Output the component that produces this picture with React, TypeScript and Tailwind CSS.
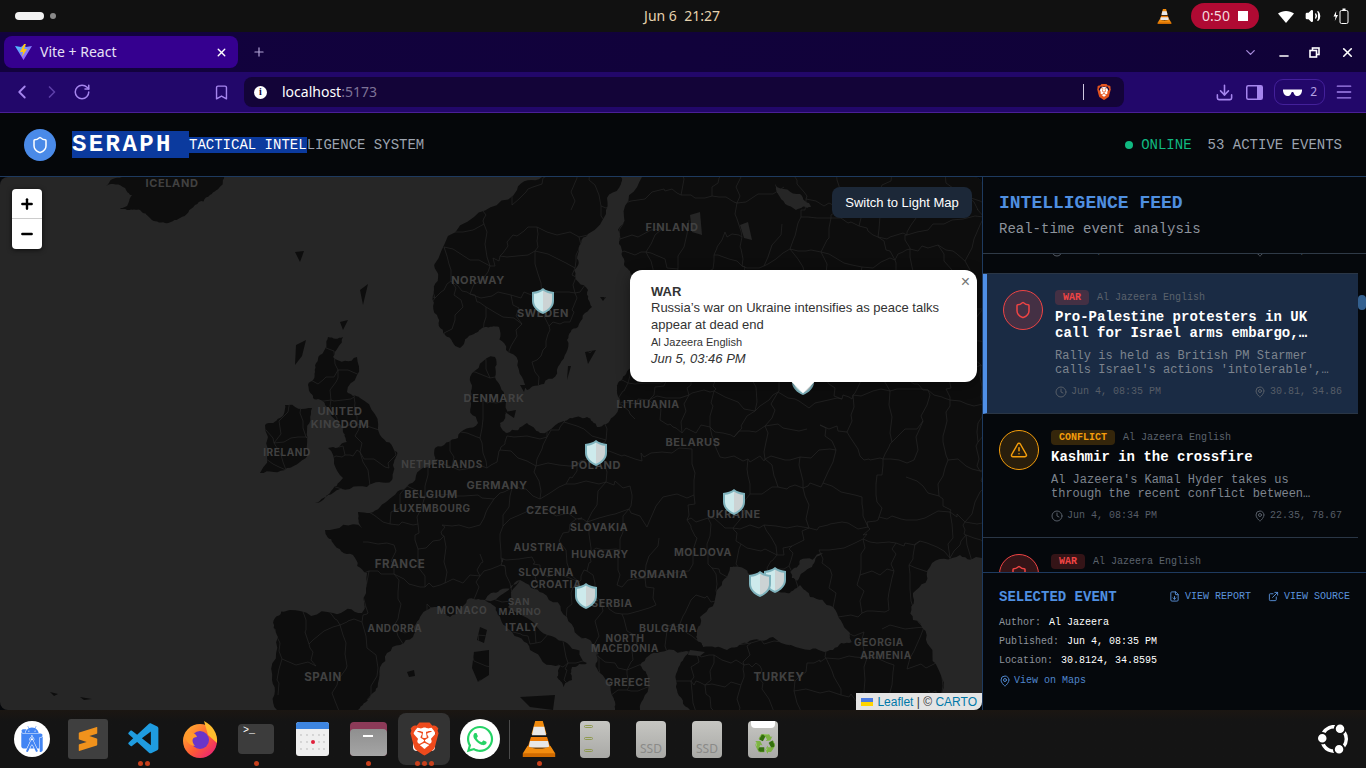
import {
  AlertTriangle,
  Bookmark,
  ChevronDown,
  ChevronLeft,
  ChevronRight,
  Clock,
  Download,
  ExternalLink,
  FileDown,
  MapPin,
  Menu,
  Minus,
  Plus,
  RotateCw,
  Shield,
  Volume2,
  X,
} from "lucide-react";
import { FaWhatsapp } from "react-icons/fa";
import { SiAndroidstudio, SiBrave, SiSublimetext, SiUbuntu } from "react-icons/si";
import { VscVscode } from "react-icons/vsc";

const mono = "font-['Liberation_Mono',monospace]";

type Pt = number[];

const rnd = (a: number, b: number) => {
  const v = Math.sin(a * 12.9898 + b * 78.233) * 43758.5453;
  return v - Math.floor(v);
};

const onFrame = (a: Pt, b: Pt) =>
  (a[1] <= 177 && b[1] <= 177) || (a[1] >= 710 && b[1] >= 710) || (a[0] >= 982 && b[0] >= 982);

// break the straight coast edges up a bit so they read as coastline
const roughen = (pts: Pt[], seed: number) => {
  if (pts.length < 6) return pts;
  let out = pts;
  for (let round = 0; round < 3; round++) {
    const next: Pt[] = [];
    out.forEach((a, i) => {
      const b = out[(i + 1) % out.length];
      next.push(a);
      if (onFrame(a, b)) return;
      const dx = b[0] - a[0];
      const dy = b[1] - a[1];
      const k = (rnd(a[0] + seed, b[1] + round) - 0.5) * 0.34;
      next.push([
        Math.round((a[0] + dx / 2 - dy * k) * 10) / 10,
        Math.round((a[1] + dy / 2 + dx * k) * 10) / 10,
      ]);
    });
    out = next;
  }
  return out;
};

const toPath = (pts: Pt[]) => "M" + pts.map((p) => p.join(" ")).join("L") + "Z";

const LAND: Pt[][] = [
  // mainland
  [
    [642, 177], [624, 217], [619, 244], [624, 264], [631, 274], [660, 300], [650, 340], [628, 370],
    [618, 383], [617, 393], [613, 417], [597, 427], [587, 417], [570, 418], [540, 433], [527, 423],
    [507, 433], [500, 423], [506, 397], [495, 377], [495, 357], [470, 377], [470, 400], [478, 423],
    [458, 438], [435, 448], [437, 463], [420, 470], [400, 490], [380, 507], [358, 512], [362, 528],
    [325, 530], [333, 543], [353, 555], [367, 573], [362, 613], [333, 613], [290, 610], [275, 618],
    [278, 637], [272, 680], [277, 710], [358, 710], [370, 697], [378, 683], [387, 653], [413, 637],
    [420, 617], [440, 607], [450, 617], [467, 600], [485, 600], [500, 590], [520, 580], [543, 593],
    [567, 617], [590, 640], [597, 653], [600, 673], [613, 697], [615, 710], [640, 710], [648, 680],
    [640, 665], [660, 652], [695, 650], [680, 665], [677, 690], [690, 710], [982, 710], [982, 177],
  ],
  // scandinavia
  [
    [434, 265], [474, 217], [517, 190], [542, 177], [621, 177], [621, 184], [606, 210], [588, 234],
    [578, 254], [574, 270], [588, 290], [592, 307], [578, 327], [567, 340], [560, 364], [544, 384],
    [527, 390], [522, 377], [506, 350], [499, 327], [485, 327], [474, 334], [460, 348], [445, 335],
    [437, 315], [434, 290],
  ],
  // iceland
  [
    [122, 177], [224, 177], [222, 185], [210, 195], [195, 205], [180, 218], [165, 223], [150, 218],
    [140, 210], [128, 210], [120, 208], [132, 195], [125, 188], [106, 186],
  ],
  // great britain
  [
    [328, 337], [343, 337], [333, 357], [357, 357], [347, 392], [360, 398], [380, 435], [397, 452],
    [393, 465], [392, 480], [367, 487], [333, 493], [315, 503], [330, 493], [343, 478], [328, 448],
    [347, 442], [343, 432], [325, 405], [313, 398], [308, 385], [315, 372], [320, 355],
  ],
  // ireland
  [[285, 405], [312, 408], [307, 432], [308, 452], [287, 468], [260, 473], [265, 425], [280, 418]],
  // italy
  [
    [485, 600], [520, 580], [508, 607], [537, 627], [567, 643], [587, 663], [572, 667], [572, 680],
    [563, 687], [557, 677], [560, 665], [530, 650], [510, 630], [497, 612],
  ],
  // sicily, corsica, sardinia
  [[520, 697], [555, 695], [553, 710], [530, 707]],
  [[480, 627], [487, 630], [484, 643], [477, 640]],
  [[474, 652], [489, 650], [489, 675], [478, 682], [472, 668]],
  // small islands
  [[585, 352], [596, 350], [588, 364]],
  [[568, 366], [571, 366], [567, 380]],
  [[600, 297], [606, 297], [603, 301]],
  [[407, 672], [414, 670], [415, 676], [409, 677]],
  [[295, 252], [304, 251], [300, 262]],
  [[360, 290], [368, 284], [363, 305]],
  [[296, 345], [306, 340], [302, 356], [295, 365]],
  [[340, 322], [348, 320], [343, 330]],
  [[520, 385], [526, 385], [524, 392]],
  [[505, 412], [516, 410], [514, 418]],
  [[50, 692], [58, 694], [54, 696]],
  [[80, 697], [92, 699], [84, 700]],
];

const SEAS: Pt[][] = [
  // black sea
  [
    [697, 633], [700, 617], [717, 590], [730, 567], [740, 567], [753, 577], [777, 590], [790, 593],
    [800, 585], [810, 597], [833, 607], [850, 633], [852, 642], [833, 650], [810, 650], [773, 637],
    [747, 643], [727, 650], [703, 647], [697, 640],
  ],
  // azov
  [[790, 572], [800, 560], [823, 553], [812, 567], [797, 581], [792, 578]],
  // caspian
  [
    [913, 593], [930, 567], [960, 555], [982, 558], [982, 710], [933, 710], [940, 673], [930, 647],
    [913, 620],
  ],
  // white sea
  [[775, 184], [800, 194], [811, 207], [796, 210], [778, 194], [776, 188]],
  // marmara and lakes
  [[690, 650], [705, 652], [700, 656], [688, 655]],
  [[690, 215], [700, 212], [702, 235], [692, 232]],
  [[740, 225], [748, 222], [752, 240], [744, 238]],
];

const LAND_PATH = LAND.map((p, i) => toPath(roughen(p, i * 7 + 1))).join("");
const SEA_PATHS = SEAS.map((p, i) => toPath(roughen(p, i * 5 + 2)));

// thin regional borders, jittered mesh clipped to the land
const buildBorders = () => {
  const cell = 29;
  const pt = (i: number, j: number) => [
    Math.round(250 + i * cell + (rnd(i, j) - 0.5) * 24),
    Math.round(170 + j * cell + (rnd(j + 40, i) - 0.5) * 24),
  ];
  let d = "";
  const edge = (a: number[], b: number[], s: number) => {
    d += `M${a[0]} ${a[1]}`;
    for (let t = 1; t < 4; t++) {
      const x = a[0] + ((b[0] - a[0]) * t) / 4 + (rnd(s + t, a[0]) - 0.5) * 7;
      const y = a[1] + ((b[1] - a[1]) * t) / 4 + (rnd(a[1], s + t) - 0.5) * 7;
      d += `L${Math.round(x)} ${Math.round(y)}`;
    }
    d += `L${b[0]} ${b[1]}`;
  };
  for (let i = 0; i < 27; i++) {
    for (let j = 0; j < 20; j++) {
      if (rnd(i + 3, j + 7) > 0.3) edge(pt(i, j), pt(i + 1, j), i + j);
      if (rnd(i + 9, j + 2) > 0.3) edge(pt(i, j), pt(i, j + 1), i * j + 1);
    }
  }
  return d;
};

const BORDERS = buildBorders();

const LABELS: [string, number, number, number][] = [
  ["ICELAND", 172, 187, 11],
  ["NORWAY", 478, 284, 11],
  ["SWEDEN", 543, 317, 11],
  ["FINLAND", 672, 231, 11],
  ["DENMARK", 494, 402, 11],
  ["LITHUANIA", 648, 408, 10.5],
  ["UNITED", 340, 415, 11],
  ["KINGDOM", 340, 428, 11],
  ["IRELAND", 287, 456, 10],
  ["NETHERLANDS", 442, 468, 10],
  ["BELARUS", 693, 446, 11],
  ["POLAND", 596, 469, 11],
  ["BELGIUM", 431, 498, 11],
  ["GERMANY", 497, 489, 11],
  ["LUXEMBOURG", 432, 512, 10],
  ["CZECHIA", 552, 514, 10.5],
  ["UKRAINE", 734, 518, 11],
  ["SLOVAKIA", 599, 531, 10.5],
  ["AUSTRIA", 539, 551, 10.5],
  ["HUNGARY", 600, 558, 10.5],
  ["MOLDOVA", 703, 556, 10.5],
  ["FRANCE", 400, 568, 11.5],
  ["ROMANIA", 659, 578, 11],
  ["SLOVENIA", 546, 576, 10],
  ["CROATIA", 556, 588, 10.5],
  ["SERBIA", 612, 607, 10.5],
  ["MONACO", 462, 614, 10],
  ["SAN", 519, 605, 9.5],
  ["MARINO", 520, 615, 9.5],
  ["ANDORRA", 395, 632, 10],
  ["ITALY", 522, 631, 11],
  ["BULGARIA", 668, 632, 10.5],
  ["NORTH", 625, 642, 10],
  ["MACEDONIA", 625, 652, 10],
  ["GEORGIA", 879, 646, 10],
  ["ARMENIA", 886, 659, 10],
  ["SPAIN", 323, 681, 11.5],
  ["TURKEY", 779, 681, 11.5],
  ["GREECE", 628, 686, 10.5],
];

const MARKERS: [number, number][] = [
  [543, 301],
  [596, 453],
  [734, 502],
  [586, 596],
  [775, 580],
  [760, 584],
  [803, 382],
];

function MapMarker({ x, y }: { x: number; y: number }) {
  return (
    <g transform={`translate(${x - 11} ${y - 13})`}>
      <path d="M11 0C14 2.6 18 3.6 22 4V13C22 19 17 23.6 11 26C5 23.6 0 19 0 13V4C4 3.6 8 2.6 11 0Z" fill="#7fb3bd" />
      <path d="M11 2.4C8.4 4.4 5.4 5.4 2 5.8V13C2 18 6 21.8 11 23.8Z" fill="#cdeaec" />
      <path d="M11 2.4C13.6 4.4 16.6 5.4 20 5.8V13C20 18 16 21.8 11 23.8Z" fill="#ccd3d4" />
    </g>
  );
}

function WorldMap() {
  return (
    <svg className="absolute inset-0 h-full w-full" viewBox="0 177 982 533">
      <defs>
        <clipPath id="land-clip">
          <path d={LAND_PATH} />
        </clipPath>
      </defs>
      <rect x="0" y="177" width="982" height="533" fill="#262626" />
      <path d={LAND_PATH} fill="#0d0d0d" />
      <path d={BORDERS} clipPath="url(#land-clip)" fill="none" stroke="#262626" strokeWidth="0.7" />
      {SEA_PATHS.map((d, i) => (
        <path key={i} d={d} fill="#262626" />
      ))}
      {LABELS.map(([name, x, y, size]) => (
        <text
          key={name}
          x={x}
          y={y}
          textAnchor="middle"
          fontFamily="Inter, sans-serif"
          fontWeight="700"
          fontSize={size}
          letterSpacing="0.6"
          fill="#414141"
        >
          {name}
        </text>
      ))}
      {MARKERS.map(([x, y]) => (
        <MapMarker key={`${x}-${y}`} x={x} y={y} />
      ))}
    </svg>
  );
}

function EventItem({
  kind,
  title,
  desc,
  date,
  coords,
  active,
}: {
  kind: "WAR" | "CONFLICT";
  title: string;
  desc: string;
  date: string;
  coords: string;
  active?: boolean;
}) {
  const war = kind === "WAR";
  return (
    <div
      className={`flex gap-3 border-b border-[#2a3646] px-4 pb-[15px] pt-4 ${
        active ? "border-l-4 border-l-[#4f8fe6] bg-[#1a2b44]" : ""
      }`}
    >
      <div
        className={`flex h-10 w-10 shrink-0 items-center justify-center rounded-full border ${
          war ? "border-[#ef4444] bg-[#ef4444]/20 text-[#ef4444]" : "border-[#f59e0b] bg-[#f59e0b]/15 text-[#f59e0b]"
        }`}
      >
        {war ? <Shield size={18} /> : <AlertTriangle size={18} />}
      </div>
      <div className="min-w-0 flex-1">
        <div className="flex h-[15px] items-center gap-2 text-[10px]">
          <span
            className={`rounded px-2 font-bold leading-[15px] ${
              war ? "bg-[#ef4444]/20 text-[#ef4444]" : "bg-[#f59e0b]/20 text-[#f59e0b]"
            }`}
          >
            {kind}
          </span>
          <span className="text-[#5b626c]">Al Jazeera English</span>
        </div>
        <div className="mt-[4px] line-clamp-2 text-sm font-bold leading-4 text-white">{title}</div>
        <div className="mt-2 line-clamp-2 text-xs leading-[14px] text-[#7d848e]">{desc}</div>
        <div className="mt-2 flex h-[13px] items-center justify-between text-[10px] text-[#565d67]">
          <span className="flex items-center gap-1">
            <Clock size={12} />
            {date}
          </span>
          <span className="flex items-center gap-1">
            <MapPin size={12} />
            {coords}
          </span>
        </div>
      </div>
    </div>
  );
}

function FeedPanel() {
  return (
    <div className={`flex w-[384px] shrink-0 flex-col border-l border-[#1e3a5f] bg-[#05080c] ${mono}`}>
      <div className="h-[77px] shrink-0 border-b border-[#2f3a47] px-4 pt-4">
        <h2 className="text-lg font-bold leading-[20px] text-[#4f8fe0]">INTELLIGENCE FEED</h2>
        <p className="mt-[6px] text-sm leading-[20px] text-[#8d939c]">Real-time event analysis</p>
      </div>
      <div className="flex min-h-0 flex-1 overflow-hidden">
        <div className="min-w-0 flex-1">
          <div className="flex h-5 flex-col justify-end overflow-hidden border-b border-[#2a3646] pb-[16px] pl-[68px] pr-4">
            <div className="flex h-[13px] shrink-0 items-center justify-between text-[10px] text-[#565d67]">
              <span className="flex items-center gap-1">
                <Clock size={12} />
                Jun 4, 08:36 PM
              </span>
              <span className="flex items-center gap-1">
                <MapPin size={12} />
                33.51, 36.29
              </span>
            </div>
          </div>
          <EventItem
            active
            kind="WAR"
            title="Pro-Palestine protesters in UK call for Israel arms embargo, sanctions"
            desc="Rally is held as British PM Starmer calls Israel's actions 'intolerable', demonstrators demand"
            date="Jun 4, 08:35 PM"
            coords="30.81, 34.86"
          />
          <EventItem
            kind="CONFLICT"
            title="Kashmir in the crossfire"
            desc="Al Jazeera's Kamal Hyder takes us through the recent conflict between Pakistan and India"
            date="Jun 4, 08:34 PM"
            coords="22.35, 78.67"
          />
          <div className="flex gap-3 px-4 pt-4">
            <div className="flex h-10 w-10 shrink-0 items-center justify-center rounded-full border border-[#ef4444] bg-[#ef4444]/20 text-[#ef4444]">
              <Shield size={18} />
            </div>
            <div className="flex h-[15px] items-center gap-2 text-[10px]">
              <span className="rounded bg-[#ef4444]/20 px-2 font-bold leading-[15px] text-[#ef4444]">WAR</span>
              <span className="text-[#5b626c]">Al Jazeera English</span>
            </div>
          </div>
        </div>
        <div className="w-2 shrink-0 pt-[41px]">
          <div className="h-[15px] w-2 rounded-full bg-[#33608f]" />
        </div>
      </div>
      <div className="h-[138px] shrink-0 border-t border-[#1e3a5f] bg-[#05080c] px-4 pt-4 text-[10px]">
        <div className="flex h-[15px] items-center justify-between">
          <h3 className="text-sm font-bold text-[#4f8fe0]">SELECTED EVENT</h3>
          <div className="flex items-center gap-[17px] text-[#5b93dc]">
            <span className="flex items-center gap-[5px]">
              <FileDown size={11} />
              VIEW REPORT
            </span>
            <span className="flex items-center gap-[5px]">
              <ExternalLink size={11} />
              VIEW SOURCE
            </span>
          </div>
        </div>
        <div className="mt-[13px] flex flex-col gap-[7px] leading-3">
          <div>
            <span className="text-[#8d939c]">Author:</span>
            <span className="ml-2 text-white">Al Jazeera</span>
          </div>
          <div>
            <span className="text-[#8d939c]">Published:</span>
            <span className="ml-2 text-white">Jun 4, 08:35 PM</span>
          </div>
          <div>
            <span className="text-[#8d939c]">Location:</span>
            <span className="ml-2 text-white">30.8124, 34.8595</span>
          </div>
          <div className="flex items-center gap-[3px] pt-px text-[#4f86cc]">
            <MapPin size={12} />
            View on Maps
          </div>
        </div>
      </div>
    </div>
  );
}

function MapPanel() {
  return (
    <div className="relative min-w-0 flex-1 overflow-hidden rounded-lg">
      <WorldMap />
      <div className="absolute left-3 top-3 w-[30px] overflow-hidden rounded bg-white text-black shadow-[0_1px_5px_rgba(0,0,0,0.65)]">
        <div className="flex h-[30px] items-center justify-center border-b border-[#ccc]">
          <Plus size={16} strokeWidth={3.6} />
        </div>
        <div className="flex h-[30px] items-center justify-center">
          <Minus size={16} strokeWidth={3.6} />
        </div>
      </div>
      <button className="absolute right-[10px] top-[10px] flex h-[31px] w-[140px] items-center justify-center rounded-lg bg-[#1c2838] font-['Liberation_Sans',sans-serif] text-[13px] text-white">
        Switch to Light Map
      </button>
      <div className="absolute left-[630px] top-[93px] h-[112px] w-[347px] rounded-xl bg-white pl-[21px] pt-[13px] font-['Liberation_Sans',sans-serif] text-[13px] leading-[17px] text-[#333] shadow-[0_3px_14px_rgba(0,0,0,0.4)]">
        <div className="font-bold">WAR</div>
        <div className="-mt-px w-[300px]">Russia’s war on Ukraine intensifies as peace talks appear at dead end</div>
        <div className="mt-[2px] text-[11px] leading-[15px]">Al Jazeera English</div>
        <div className="italic">Jun 5, 03:46 PM</div>
        <span className="absolute right-[7px] top-[4px] text-base leading-4 text-[#757575]">×</span>
        <div className="absolute bottom-[-8px] left-[165px] h-4 w-4 rotate-45 bg-white" />
      </div>
      <div className="absolute bottom-0 right-0 flex h-[17px] items-center gap-1 bg-[#e4e4e4] pl-[5px] pr-[5px] font-['Liberation_Sans',sans-serif] text-xs text-[#333]">
        <svg width="12" height="8" viewBox="0 0 12 8">
          <rect width="12" height="4" fill="#4C7BE1" />
          <rect y="4" width="12" height="4" fill="#FFD500" />
        </svg>
        <span>
          <span className="text-[#0078a8]">Leaflet</span> | © <span className="text-[#0078a8]">CARTO</span>
        </span>
      </div>
    </div>
  );
}

function AppHeader() {
  return (
    <div className={`flex h-[64px] shrink-0 items-center justify-between border-b border-[#1e3a5f] bg-[#05070a] pl-6 pr-6 ${mono}`}>
      <div className="flex items-center">
        <div className="flex h-8 w-8 items-center justify-center rounded-full bg-[#4a8ae8]">
          <Shield size={18} className="text-white" />
        </div>
        <div className="ml-4 flex h-[27px] w-[117px] items-center bg-[#0b3a9e] text-2xl font-bold tracking-[2.4px] text-white">
          SERAPH
        </div>
        <div className="text-sm text-[#9ca3af]">
          <span className="bg-[#0b3a9e] text-white">TACTICAL INTEL</span>LIGENCE SYSTEM
        </div>
      </div>
      <div className="flex items-center text-sm">
        <span className="h-2 w-2 rounded-full bg-[#10b981]" />
        <span className="ml-2 text-[#10b981]">ONLINE</span>
        <span className="ml-4 text-[#9ca3af]">53 ACTIVE EVENTS</span>
      </div>
    </div>
  );
}

function VlcCone({ size }: { size: number }) {
  return (
    <svg width={size} height={size} viewBox="0 0 34 38">
      <path d="M13 0H21L25 14H9Z" fill="#f08a0c" />
      <path d="M11.5 6H22.5L24.5 15H9.5Z" fill="#e8e8e8" />
      <path d="M8.5 17H25.5L29 28H5Z" fill="#ee7d08" />
      <path d="M7.5 21H26.5L28 28H6Z" fill="#e8e8e8" />
      <path d="M5 26C10 30 24 30 29 26L34 34V38H0V34Z" fill="#f28c0f" />
      <path d="M0 34H34V38H0Z" fill="#cf6a00" />
    </svg>
  );
}

function SystemBar() {
  return (
    <div className="flex h-8 shrink-0 items-center bg-[#111111] pl-[15px] pr-[17px] font-['Noto_Sans',sans-serif]">
      <div className="flex flex-1 items-center gap-[6px]">
        <span className="h-2 w-[29px] rounded-full bg-[#f2f2f2]" />
        <span className="h-[6px] w-[6px] rounded-full bg-[#8a8a8a]" />
      </div>
      <div className="text-sm text-[#e6d2ad]">Jun 6&nbsp;&nbsp;21:27</div>
      <div className="flex flex-1 items-center justify-end">
        <VlcCone size={15} />
        <div className="ml-[19px] flex h-[26px] w-[68px] items-center justify-center gap-[8px] rounded-full bg-[#b00a33] text-sm text-[#f3d9df]">
          0:50
          <span className="h-[10px] w-[10px] bg-white" />
        </div>
        <svg className="ml-[19px]" width="16" height="13" viewBox="0 0 16 13">
          <path d="M8 13L0 3.6C4.5 0 11.5 0 16 3.6Z" fill="#fff" />
        </svg>
        <Volume2 size={16} className="ml-[11px] fill-white text-white" />
        <svg className="ml-[12px]" width="16" height="16" viewBox="0 0 16 16">
          <path d="M3.2 3L0.5 8.5H2.6L1.8 13L5 7H3Z" fill="#fff" />
          <rect x="7" y="2.5" width="8" height="13" rx="1.5" fill="none" stroke="#fff" />
          <rect x="9.5" y="0.5" width="3" height="2" fill="#fff" />
        </svg>
      </div>
    </div>
  );
}

function ViteIcon() {
  return (
    <svg width="17" height="16" viewBox="0 0 17 16">
      <defs>
        <linearGradient id="vite-a" x1="0" y1="0" x2="1" y2="1">
          <stop offset="0" stopColor="#41d1ff" />
          <stop offset="1" stopColor="#bd34fe" />
        </linearGradient>
      </defs>
      <path d="M0 2L8.5 16L17 2L11 3L8.5 1L6 3Z" fill="url(#vite-a)" />
      <path d="M9 0L5 8H8L7 13L12 5H9L11 0Z" fill="#ffc517" />
    </svg>
  );
}

function BrowserChrome() {
  return (
    <>
      <div className="flex h-10 shrink-0 items-center bg-gradient-to-r from-[#12023e] to-[#100238] pl-1 font-['Noto_Sans',sans-serif]">
        <div className="flex h-8 w-[234px] items-center rounded-lg bg-[#35008f] pl-[11px] pr-[10px] text-sm text-[#e6e0f5]">
          <ViteIcon />
          <span className="ml-2 flex-1">Vite + React</span>
          <X size={13} strokeWidth={2.5} className="text-white" />
        </div>
        <Plus size={14} className="ml-[14px] text-[#b4a6d8]" />
        <div className="ml-auto flex items-center pr-[11px]">
          <ChevronDown size={15} className="text-[#a78bdb]" />
          <Minus size={14} strokeWidth={2.6} className="ml-[19px] translate-y-[4px] text-white" />
          <svg className="ml-[18px]" width="11" height="11" viewBox="0 0 11 11" fill="none" stroke="#fff" strokeWidth="1.6">
            <rect x="3.5" y="1" width="6.5" height="6.5" />
            <rect x="1" y="3.5" width="6.5" height="6.5" fill="#100238" />
          </svg>
          <X size={15} strokeWidth={2.6} className="ml-[20px] text-white" />
        </div>
      </div>
      <div className="flex h-[41px] shrink-0 items-center border-b border-[#4a1f96] bg-[#22076a] font-['Noto_Sans',sans-serif] text-[#a585ee]">
        <ChevronLeft size={22} className="ml-[11px]" />
        <ChevronRight size={20} className="ml-[9px] text-[#5d3fa8]" />
        <RotateCw size={18} className="ml-[11px]" />
        <Bookmark size={17} className="ml-[122px]" />
        <div className="ml-[14px] flex h-[30px] w-[880px] items-center rounded-lg bg-[#130438] pl-[10px] pr-[12px] text-sm">
          <span className="flex h-[13px] w-[13px] items-center justify-center rounded-full bg-white font-['Liberation_Serif',serif] text-[10px] font-bold text-[#130438]">
            i
          </span>
          <span className="ml-[15px] text-white">localhost</span>
          <span className="text-[#7d7397]">:5173</span>
          <span className="ml-auto mr-[12px] h-[16px] w-px bg-[#cfc8e0]" />
          <span className="relative flex h-[18px] w-[16px] items-center justify-center">
            <span className="absolute h-[10px] w-[8px] rounded-sm bg-white" />
            <SiBrave size={18} className="relative text-[#e4541f]" />
          </span>
        </div>
        <Download size={19} className="ml-[91px]" />
        <svg className="ml-[12px]" width="17" height="15" viewBox="0 0 17 15">
          <rect x="0.75" y="0.75" width="15.5" height="13.5" rx="1.5" fill="none" stroke="currentColor" strokeWidth="1.5" />
          <rect x="11" y="1" width="5" height="13" fill="currentColor" />
        </svg>
        <div className="ml-[11px] flex h-[26px] w-[51px] items-center justify-between rounded-[9px] border border-[#43209a] pl-[8px] pr-[7px] text-xs text-[#b5a2e4]">
          <svg width="19" height="9" viewBox="0 0 19 9">
            <path d="M0 1.5H19V3C18.5 7 16 8.5 13.5 8C11.5 7.6 11 5.5 10.2 4H8.8C8 5.5 7.5 7.6 5.5 8C3 8.5 0.5 7 0 3Z" fill="#fff" />
          </svg>
          2
        </div>
        <Menu size={20} strokeWidth={1.6} className="ml-[9px]" />
      </div>
    </>
  );
}

function DockSlot({ children, dots = 0, className = "" }: { children: React.ReactNode; dots?: number; className?: string }) {
  return (
    <div className={`relative flex h-[52px] w-[52px] shrink-0 items-center justify-center ${className}`}>
      {children}
      <div className="absolute bottom-[-1px] flex w-full justify-center gap-[2px]">
        {Array.from({ length: dots }).map((_, i) => (
          <span key={i} className="h-[5px] w-[5px] rounded-full bg-[#c8401c]" />
        ))}
      </div>
    </div>
  );
}

function DriveTile({ children }: { children?: React.ReactNode }) {
  return (
    <div className="relative h-[37px] w-[30px] overflow-hidden rounded-[4px] bg-gradient-to-b from-[#c6c6c2] to-[#a9a9a6]">
      {children}
    </div>
  );
}

function SsdTile() {
  return (
    <DriveTile>
      <span className="absolute bottom-[3px] left-[4px] font-['Noto_Sans',sans-serif] text-[12px] leading-3 text-[#8a8a88]">
        SSD
      </span>
    </DriveTile>
  );
}

function Dock() {
  return (
    <div className="flex h-[58px] shrink-0 items-center bg-gradient-to-b from-[#1b1612] to-[#141414] to-20% pl-[6px] pr-[18px]">
      <DockSlot>
        <div className="flex h-9 w-9 items-center justify-center rounded-full bg-white">
          <SiAndroidstudio size={26} className="text-[#4285f4]" />
        </div>
      </DockSlot>
      <DockSlot className="ml-1">
        <div className="flex h-10 w-10 items-center justify-center rounded-[3px] bg-[#3f3f3f]">
          <SiSublimetext size={24} className="text-[#f0921c]" />
        </div>
      </DockSlot>
      <DockSlot dots={2} className="ml-1">
        <VscVscode size={37} className="text-[#1f9ce0]" />
      </DockSlot>
      <DockSlot className="ml-1">
        <svg width="36" height="37" viewBox="0 0 36 37">
          <defs>
            <linearGradient id="fx-a" x1="0" y1="0" x2="1" y2="1">
              <stop offset="0" stopColor="#ffbd2e" />
              <stop offset="0.55" stopColor="#ff5a35" />
              <stop offset="1" stopColor="#e31587" />
            </linearGradient>
          </defs>
          <circle cx="18" cy="20" r="17" fill="url(#fx-a)" />
          <path d="M22 0C30 4 36 12 35 22L26 14Z" fill="#ffbd2e" />
          <circle cx="18" cy="19" r="9" fill="#6a35c8" />
          <path d="M3 12C8 10 14 12 15 16C10 16 9 20 13 25C6 24 2 18 3 12Z" fill="#ff9a2c" />
        </svg>
      </DockSlot>
      <DockSlot dots={1} className="ml-1">
        <div className="h-[30px] w-[36px] rounded bg-[#3c3c3c] pl-[5px] pt-[1px] font-['Liberation_Mono',monospace] text-[10px] leading-3 text-white">
          &gt;_
        </div>
      </DockSlot>
      <DockSlot className="ml-1">
        <div className="h-[34px] w-[33px] overflow-hidden rounded-[3px] bg-[#efefef]">
          <div className="h-[7px] bg-[#3d85e0]" />
          <svg className="mt-[4px] ml-[4px]" width="25" height="20" viewBox="0 0 25 20">
            {[2, 9, 16].map((y) =>
              [1, 7, 13, 19, 24].map((x) => <circle key={`${x}-${y}`} cx={x} cy={y} r="0.9" fill="#c9c9c9" />),
            )}
            <circle cx="13" cy="9" r="2" fill="#e0203c" />
          </svg>
        </div>
      </DockSlot>
      <DockSlot dots={1} className="ml-1">
        <div className="relative h-[34px] w-[37px] rounded-[4px] bg-gradient-to-b from-[#8c3a58] to-[#8c3a58] to-30%">
          <div className="absolute bottom-0 h-[27px] w-full rounded-[4px] bg-gradient-to-b from-[#8f8f8f] to-[#a5a5a5]" />
          <div className="absolute left-[13px] top-[13px] h-[2px] w-[10px] bg-white" />
        </div>
      </DockSlot>
      <DockSlot dots={3} className="ml-1 rounded-lg bg-[#333333]">
        <span className="relative flex h-[38px] w-[33px] items-center justify-center">
          <span className="absolute h-[24px] w-[22px] rounded bg-white" />
          <SiBrave size={38} className="relative text-[#ee4a1c]" />
        </span>
      </DockSlot>
      <DockSlot className="ml-1">
        <div className="flex h-10 w-10 shrink-0 items-center justify-center rounded-full bg-white">
          <FaWhatsapp size={30} className="text-[#25d366]" />
        </div>
      </DockSlot>
      <div className="ml-[3px] h-[39px] w-px shrink-0 bg-[#4a4a4a]" />
      <DockSlot dots={1} className="ml-[3px]">
        <VlcCone size={36} />
      </DockSlot>
      <DockSlot className="ml-1">
        <DriveTile>
          <div className="absolute left-[4px] top-[4px] flex flex-col gap-[9px]">
            <span className="h-[3px] w-[9px] rounded-full border border-[#8f9a50]" />
            <span className="h-[3px] w-[9px] rounded-full border border-[#8f9a50]" />
            <span className="h-[3px] w-[9px] rounded-full border border-[#8f9a50]" />
          </div>
        </DriveTile>
      </DockSlot>
      <DockSlot className="ml-1">
        <SsdTile />
      </DockSlot>
      <DockSlot className="ml-1">
        <SsdTile />
      </DockSlot>
      <DockSlot className="ml-1">
        <DriveTile>
          <div className="mx-[3px] h-[7px] rounded-b-sm bg-white" />
          <span className="absolute left-[6px] top-[13px] text-[18px] leading-[18px] text-[#3faa3f]">♻</span>
        </DriveTile>
      </DockSlot>
      <SiUbuntu size={30} className="ml-auto text-white" />
    </div>
  );
}

function App() {
  return (
    <div className="flex h-[768px] w-[1366px] flex-col overflow-hidden bg-[#05070a]">
      <SystemBar />
      <BrowserChrome />
      <AppHeader />
      <div className="flex min-h-0 flex-1">
        <MapPanel />
        <FeedPanel />
      </div>
      <Dock />
    </div>
  );
}

export default App;
